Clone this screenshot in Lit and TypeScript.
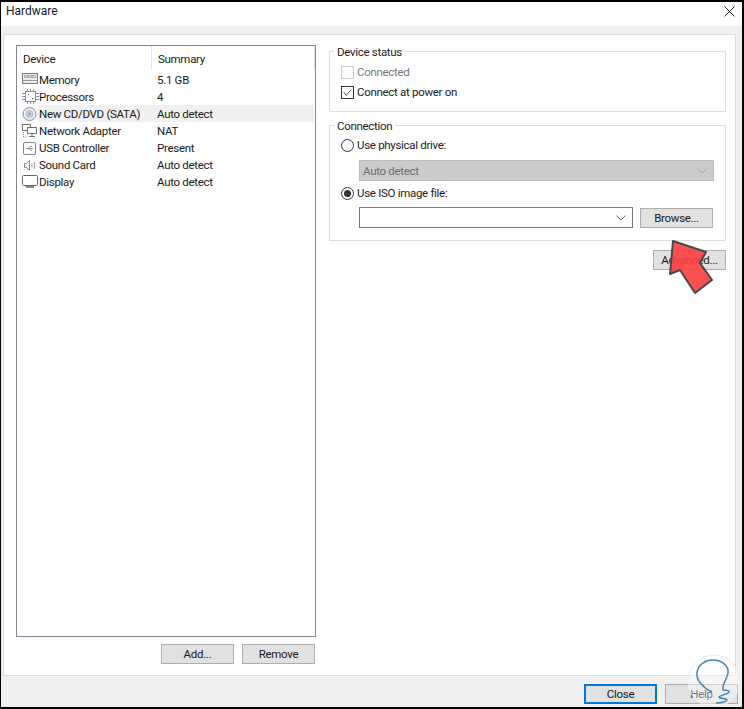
import { LitElement, html, css, svg } from "lit";
import { customElement } from "lit/decorators.js";

const ic = (body: unknown) => html`<svg class="ic" width="17" height="17" viewBox="0 0 17 17" fill="none" stroke="#6f6f6f" stroke-width="1">${body}</svg>`;
const icons = {
  memory: ic(svg`<rect x="0.500" y="1.500" width="15" height="10" fill="#ececec" stroke="#7a7a7a"/><rect x="2" y="3" width="12" height="3" fill="#a5adb5" stroke="none"/><path d="M3 4.500h2M7 4.500h2M11 4.500h2" stroke="#e4e4e4"/><path d="M1 8.500h14" stroke="#9c9c9c"/>`),
  cpu: ic(svg`<rect x="3.500" y="2.500" width="10" height="10" fill="#fff" stroke="#8a8a8a"/><path d="M6 5.500h1M10 9.500h1" stroke="#444"/><path d="M0 4.500h3M0 7.500h3M0 10.500h3M14 4.500h3M14 7.500h3M14 10.500h3M5.500 0v2M8.500 0v2M11.500 0v2M5.500 13v2M8.500 13v2M11.500 13v2" stroke="#8f8f8f"/>`),
  cd: ic(svg`<circle cx="7.500" cy="8" r="6.500" fill="#e9eff6" stroke="#858d96"/><circle cx="7.500" cy="8" r="3.500" fill="#c5d0dc" stroke="#b5bfca"/><circle cx="7.500" cy="8" r="1" fill="#fff" stroke="#7f8790"/>`),
  net: ic(svg`<rect x="0.500" y="1.500" width="8" height="6" fill="#fff"/><rect x="5.500" y="4.500" width="9" height="6" fill="#fff"/><path d="M10 11v2M7 13.500h6"/><path d="M1.500 9v5h4" stroke="#8a8a8a" stroke-dasharray="1 1"/>`),
  usb: ic(svg`<rect x="1.500" y="2.500" width="12" height="12" rx="1.500" fill="#fff" stroke="#858585"/><path d="M4 8.500h7M6 8.500l2-2h2M7 8.500l2 2h1" stroke="#8a8a8a"/>`),
  sound: ic(svg`<path d="M2.500 6.500h2l3-3v10l-3-3h-2z" fill="#fff" stroke="#858585"/><path d="M10 6.500v4M12.500 5v7" stroke="#9a9a9a"/>`),
  display: ic(svg`<rect x="0.500" y="1.500" width="15" height="10" rx="1" fill="#fff" stroke="#666"/><path d="M4 13h8" stroke="#8a8a8a" stroke-width="2"/>`),
};

const rows = [
  ["memory", "Memory", "5.1 GB"],
  ["cpu", "Processors", "4"],
  ["cd", "New CD/DVD (SATA)", "Auto detect"],
  ["net", "Network Adapter", "NAT"],
  ["usb", "USB Controller", "Present"],
  ["sound", "Sound Card", "Auto detect"],
  ["display", "Display", "Auto detect"],
] as const;

const chev = (c: string) => html`<svg width="10" height="6" viewBox="0 0 10 6" fill="none" stroke=${c}><path d="M0.500 0.500l4.500 4.500 4.500-4.500"/></svg>`;

@customElement("app-root")
export class AppRoot extends LitElement {
  static styles = css`
    :host { display: block; width: 744px; height: 709px; font: 11.5px Roboto, sans-serif; letter-spacing: -0.3px; color: #1a1a1a; }
    .frame { position: relative; box-sizing: border-box; width: 744px; height: 709px; border: solid #000; border-width: 2px 2px 2px 1px; background: #f0f0f0; display: flex; flex-direction: column; overflow: hidden; }
    .title { height: 24px; flex: none; background: #fff; display: flex; align-items: center; justify-content: space-between; padding: 0 7px 6px 5px; box-sizing: border-box; font-size: 12px; letter-spacing: 0; }
    .panel { margin: 8px 6px 0 2px; height: 642px; box-sizing: border-box; border: 1px solid #dcdcdc; background: #fff; display: grid; grid-template-columns: 300px 397px; column-gap: 13px; padding: 10px 0 0 12px; }
    .left { display: flex; flex-direction: column; }
    .list { height: 592px; box-sizing: border-box; border: 1px solid #828790; }
    .head { display: grid; grid-template-columns: 135px 163px; height: 24px; align-items: center; }
    .head span { padding-left: 6px; height: 24px; line-height: 26px; box-sizing: border-box; border-right: 1px solid #e5e5e5; }
    .row { display: grid; grid-template-columns: 17px 118px 1fr; grid-template-rows: 17px; height: 17px; line-height: 19px; margin-right: 1px; padding-left: 5px; box-sizing: border-box; }
    .head + .row { margin-top: 1px; }
    .row.sel .name, .row.sel .sum { background: #f0f0f0; }
    .row.sel .name { margin-left: -1px; padding-left: 1px; }
    .ic { display: block; margin-top: 1px; }
    .actions { display: flex; justify-content: flex-end; gap: 8px; margin: 7px 1px 0 0; }
    .btn { box-sizing: border-box; width: 73px; height: 20px; border: 1px solid #adadad; background: #e1e1e1; display: flex; align-items: center; justify-content: center; flex: none; }
    .right { display: flex; flex-direction: column; }
    fieldset { margin: 0; padding: 0; border: 1px solid #dcdcdc; box-sizing: border-box; }
    legend { margin-left: -7px; padding: 2px 3px 0; line-height: 14px; }
    .status { height: 69px; margin-top: -2px; padding: 0 11px; }
    .conn { height: 124px; margin-top: 5px; padding: 0 11px; }
    .opt { display: flex; align-items: center; gap: 3px; height: 18px; }
    .opt.second { margin-top: 2px; }
    .opt.iso { margin-top: 3px; }
    .opt.first { margin-top: 3px; }
    .status .opt.first { margin-top: 4px; }
    .box { width: 13px; height: 13px; box-sizing: border-box; border: 1px solid #333; background: #fff; display: block; flex: none; }
    .box.off { border-color: #ccc; }
    .muted { color: #777; }
    .radio { border-radius: 50%; display: flex; align-items: center; justify-content: center; }
    .radio i { width: 7px; height: 7px; border-radius: 50%; background: #333; }
    .combo { box-sizing: border-box; height: 21px; margin-left: 18px; padding: 0 6px 0 3px; border: 1px solid #7a7a7a; background: #fff; display: flex; align-items: center; justify-content: space-between; }
    .combo.dis { border-color: #bbb; background: #ccc; color: #6d6d6d; width: 355px; margin-top: 6px; }
    .isorow { display: flex; gap: 7px; align-items: center; margin-top: 5px; }
    .isorow .combo { width: 274px; }
    .adv { align-self: flex-end; margin-top: 9px; }
    .foot { display: flex; justify-content: flex-end; gap: 8px; padding: 8px 4px 0 0; }
    .close { border: 2px solid #0078d7; }
    .overlay { position: absolute; left: 0; top: 0; pointer-events: none; }
  `;

  render() {
    return html`<div class="frame">
      <div class="title"><span>Hardware</span>
        <svg width="11" height="11" viewBox="0 0 11 11" stroke="#222"><path d="M0.500 0.500l10 10M10.500 0.500l-10 10"/></svg></div>
      <div class="panel">
        <div class="left">
          <div class="list">
            <div class="head"><span>Device</span><span>Summary</span></div>
            ${rows.map(([k, n, s]) => html`<div class="row ${k === "cd" ? "sel" : ""}">${icons[k]}<span class="name">${n}</span><span class="sum">${s}</span></div>`)}
          </div>
          <div class="actions"><div class="btn">Add...</div><div class="btn">Remove</div></div>
        </div>
        <div class="right">
          <fieldset class="status"><legend>Device status</legend>
            <div class="opt muted first"><span class="box off"></span>Connected</div>
            <div class="opt second"><svg class="box" viewBox="0 0 13 13" fill="none"><path d="M2 6l3 4 6-7" stroke="#333"/></svg>Connect at power on</div>
          </fieldset>
          <fieldset class="conn"><legend>Connection</legend>
            <div class="opt first"><span class="box radio"></span>Use physical drive:</div>
            <div class="combo dis"><span>Auto detect</span>${chev("#a5a5a5")}</div>
            <div class="opt iso"><span class="box radio"><i></i></span>Use ISO image file:</div>
            <div class="isorow"><div class="combo"><span></span>${chev("#666")}</div><div class="btn">Browse...</div></div>
          </fieldset>
          <div class="btn adv">Advanced...</div>
        </div>
      </div>
      <div class="foot"><div class="btn close">Close</div><div class="btn">Help</div></div>
      <svg class="overlay" width="744" height="709" viewBox="1 2 744 709">
        <path d="M673 241L706 252L700 263L712 280L695 293L680 270L670 274Z" fill="#fb4141" fill-opacity="0.92" stroke="#484848" stroke-width="2" stroke-linejoin="round"/>
        <circle cx="714" cy="681" r="26" fill="#fff" fill-opacity="0.4" stroke="#e6eaef"/>
        <path d="M712 692C703 688 696 680 697 673C698 664 706 660 713 660C722 660 729 666 728 673C727 680 722 683 723 690C725 690 729 690 729 692C729 694 720 695 719 697C719 699 727 698 727 700C726 702 720 703 716 703" fill="none" stroke="#4a82b0" stroke-width="1.500"/>
      </svg>
    </div>`;
  }
}
